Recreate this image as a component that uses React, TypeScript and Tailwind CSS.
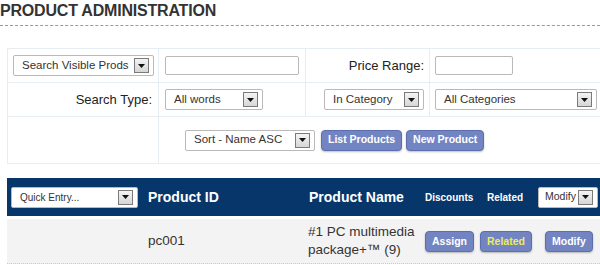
import React from "react";

const font = { fontFamily: '"Liberation Sans", Arial, sans-serif' };

interface SelectBoxProps {
  label: string;
  className?: string;
  textClass?: string;
}

function Arrow() {
  return (
    <span className="flex h-[15px] w-[15px] shrink-0 items-center justify-center border border-[#7a7a7a] bg-gradient-to-b from-[#f4f4f4] to-[#d6d6d6]">
      <svg width="7" height="4" viewBox="0 0 7 4">
        <path d="M0 0h7L3.5 4z" fill="#111" />
      </svg>
    </span>
  );
}

function SelectBox({ label, className = "", textClass = "text-[11.5px]" }: SelectBoxProps) {
  return (
    <div
      className={
        "flex h-[21px] items-center justify-between rounded-[2px] border border-[#b9b9b9] bg-white pl-2 pr-[4px] text-[#333] " +
        className
      }
    >
      <span className={textClass}>{label}</span>
      <Arrow />
    </div>
  );
}

function Btn({ label, yellow = false }: { label: string; yellow?: boolean }) {
  return (
    <button
      className={
        "h-[21px] rounded-[4px] border border-[#5b6fad] bg-[#7285c2] px-[6px] text-[10.5px] font-bold shadow-[0_1px_2px_rgba(0,0,0,0.25)] " +
        (yellow ? "text-[#f1ea5a]" : "text-white")
      }
    >
      {label}
    </button>
  );
}

export default function App() {
  return (
    <div className="h-[265px] w-[600px] overflow-hidden bg-white" style={font}>
      {/* Title */}
      <div className="border-b border-dashed border-[#9a9a9a] pb-[5px] pt-[2px]">
        <h1 className="text-[16px] font-bold leading-[18px] tracking-[-0.2px] text-[#333]">
          PRODUCT ADMINISTRATION
        </h1>
      </div>

      {/* Search panel */}
      <div className="ml-[7px] mt-[22px] grid grid-cols-[151px_147px_124px_1fr] grid-rows-[34px_34px_46px] border border-r-0 border-[#e6eef3] text-[#222]">
        <div className="flex items-center border-b border-r border-[#e6eef3] pl-[5px]">
          <SelectBox label="Search Visible Prods" className="w-[141px]" />
        </div>
        <div className="flex items-center border-b border-r border-[#e6eef3] pl-[6px]">
          <div className="h-[19px] w-[134px] rounded-[2px] border border-[#b9b9b9] bg-white" />
        </div>
        <div className="flex items-center justify-end border-b border-r border-[#e6eef3] pr-[5px] text-[13px]">
          Price Range:
        </div>
        <div className="flex items-center border-b border-[#e6eef3] pl-[5px]">
          <div className="h-[19px] w-[78px] rounded-[2px] border border-[#b9b9b9] bg-white" />
        </div>

        <div className="flex items-center justify-end border-b border-r border-[#e6eef3] pr-[6px] text-[13px]">
          Search Type:
        </div>
        <div className="flex items-center border-b border-r border-[#e6eef3] pl-[6px]">
          <SelectBox label="All words" className="w-[98px]" />
        </div>
        <div className="flex items-center justify-end border-b border-r border-[#e6eef3] pr-[5px]">
          <SelectBox label="In Category" className="w-[100px]" />
        </div>
        <div className="flex items-center border-b border-[#e6eef3] pl-[5px]">
          <SelectBox label="All Categories" className="w-[162px]" />
        </div>

        <div className="border-r border-[#e6eef3]" />
        <div className="col-span-3 flex items-center gap-[4px] pl-[26px]">
          <SelectBox label="Sort - Name ASC" className="mr-[2px] w-[130px]" />
          <Btn label="List Products" />
          <Btn label="New Product" />
        </div>
      </div>

      {/* Product list */}
      <div className="ml-[7px] mt-[14px]">
        <div className="flex h-[38px] items-center bg-[#07376a] text-white">
          <div className="w-[141px] pl-[4px]">
            <SelectBox label="Quick Entry..." className="w-[127px]" textClass="text-[10px]" />
          </div>
          <div className="w-[161px] text-[14px] font-bold">Product ID</div>
          <div className="w-[116px] text-[14px] font-bold">Product Name</div>
          <div className="w-[62px] text-[10px] font-bold">Discounts</div>
          <div className="w-[51px] text-[10px] font-bold">Related</div>
          <SelectBox label="Modify" className="w-[60px] pl-[6px] pr-[2px]" textClass="text-[10.5px]" />
        </div>
        <div className="mt-[3px] flex h-[45px] items-center border-b border-dotted border-[#c8c8c8] bg-[#f3f3f3] text-[13.5px] leading-[18px] text-[#333]">
          <div className="w-[141px]" />
          <div className="w-[160px]">pc001</div>
          <div className="w-[117px]">
            #1 PC multimedia
            <br />
            package+™ (9)
          </div>
          <div className="flex w-[55px]">
            <Btn label="Assign" />
          </div>
          <div className="flex w-[65px]">
            <Btn label="Related" yellow />
          </div>
          <Btn label="Modify" />
        </div>
      </div>
    </div>
  );
}
